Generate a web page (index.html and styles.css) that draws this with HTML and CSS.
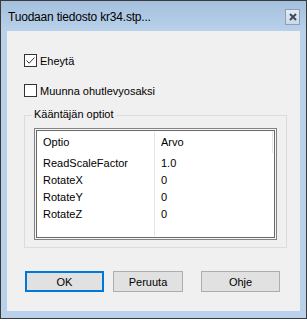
FILE: index.html
```html
<!DOCTYPE html>
<html lang="fi">
<head>
  <meta charset="UTF-8">
  <title>Tuodaan tiedosto</title>
  <link rel="stylesheet" href="styles.css">
</head>
<body>
  <div class="ikkuna">
    <div class="otsikko">
      <span class="otsikko-teksti">Tuodaan tiedosto kr34.stp...</span>
      <div class="sulje">
        <svg width="8" height="8" viewBox="0 0 8 8">
          <path d="M1 1 L7 7 M7 1 L1 7" stroke="#3c4a5c" stroke-width="2"/>
        </svg>
      </div>
    </div>

    <div class="sisalto">
      <label class="valinta eka">
        <span class="ruutu">
          <svg width="11" height="11" viewBox="0 0 11 11">
            <path d="M1.5 5.5 L4.2 8.2 L9.5 2.5" fill="none" stroke="#333" stroke-width="1"/>
          </svg>
        </span>
        Eheytä
      </label>
      <label class="valinta">
        <span class="ruutu"></span>
        Muunna ohutlevyosaksi
      </label>

      <div class="ryhma">
        <span class="ryhma-nimi">Kääntäjän optiot</span>
        <div class="lista">
          <div class="rivi otsake">
            <span class="sarake1">Optio</span>
            <span class="sarake2">Arvo</span>
          </div>
          <div class="rivi"><span class="sarake1">ReadScaleFactor</span><span class="sarake2">1.0</span></div>
          <div class="rivi"><span class="sarake1">RotateX</span><span class="sarake2">0</span></div>
          <div class="rivi"><span class="sarake1">RotateY</span><span class="sarake2">0</span></div>
          <div class="rivi"><span class="sarake1">RotateZ</span><span class="sarake2">0</span></div>
          <div class="jakaja"></div>
        </div>
      </div>

      <div class="napit">
        <button class="nappi oletus">OK</button>
        <button class="nappi kapea">Peruuta</button>
        <button class="nappi">Ohje</button>
      </div>
    </div>
  </div>
</body>
</html>
```

FILE: styles.css
```css
body {
  margin: 0;
  padding: 0;
  background: #ffffff;
  font-family: "Liberation Sans", Arial, sans-serif;
  font-size: 11px;
  color: #000;
}

.ikkuna {
  width: 307px;
  height: 319px;
  box-sizing: border-box;
  border: 1px solid #3a3a3a;
  background-color: #b9d1ea;
  display: flex;
  flex-direction: column;
}

.otsikko {
  height: 30px;
  display: flex;
  align-items: center;
  justify-content: space-between;
  padding: 0 6px 0 7px;
  background: linear-gradient(#a5c0de, #b9d1ea);
}

.otsikko-teksti {
  font-family: "Liberation Sans", Arial, sans-serif;
  font-size: 12px;
  letter-spacing: -0.2px;
  color: #000;
  margin-top: 1px;
}

.sulje {
  width: 13px;
  height: 14px;
  border: 1px solid #8e9fb3;
  background: linear-gradient(#e3ecf6, #c9d9ea);
  display: flex;
  align-items: center;
  justify-content: center;
  margin-top: 2px;
}

.sisalto {
  margin: 0 6px;
  height: 280px;
  background-color: #f0f0f0;
  padding: 0 0 0 17px;
  box-sizing: border-box;
  display: flex;
  flex-direction: column;
}

.valinta {
  display: flex;
  align-items: center;
  gap: 3px;
  height: 13px;
  margin-top: 17px;
}

.valinta.eka {
  margin-top: 23px;
}

.ruutu {
  width: 11px;
  height: 11px;
  border: 1px solid #333;
  background: #fff;
  display: flex;
}

.ryhma {
  position: relative;
  margin-top: 18px;
  padding: 12px 9px 7px 9px;
  width: 263px;
  height: 133px;
  box-sizing: border-box;
  border: 1px solid #dcdcdc;
}

.ryhma-nimi {
  position: absolute;
  top: -8px;
  left: 7px;
  padding: 0 2px;
  background: #f0f0f0;
}

.lista {
  position: relative;
  height: 112px;
  box-sizing: border-box;
  border: 1px solid #828282;
  padding: 1px;
  background: #f7f7f7;
}

.lista::before {
  content: "";
  position: absolute;
  inset: 1px;
  border: 1px solid #696969;
  background: #fff;
}

.rivi {
  position: relative;
  display: flex;
  height: 17px;
  align-items: center;
}

.rivi.otsake {
  height: 24px;
}

.sarake1 {
  width: 118px;
  padding-left: 7px;
  box-sizing: border-box;
}

.sarake2 {
  padding-left: 7px;
}

.jakaja {
  position: absolute;
  left: 119px;
  top: 3px;
  bottom: 3px;
  width: 1px;
  background: #e5e5e5;
}

.otsake::after {
  content: "";
  position: absolute;
  right: 2px;
  top: 1px;
  bottom: 1px;
  width: 1px;
  background: #e5e5e5;
}

.napit {
  display: flex;
  margin-top: 23px;
  margin-left: 1px;
}

.nappi {
  font-family: "Liberation Sans", Arial, sans-serif;
  font-size: 11px;
  color: #000;
  width: 79px;
  height: 21px;
  margin-right: 18px;
  border: 1px solid #adadad;
  background-color: #e1e1e1;
  padding: 0;
}

.nappi.kapea {
  width: 70px;
  margin-right: 18px;
}

.nappi.oletus {
  border: 2px solid #0078d7;
  margin-right: 9px;
}
```
